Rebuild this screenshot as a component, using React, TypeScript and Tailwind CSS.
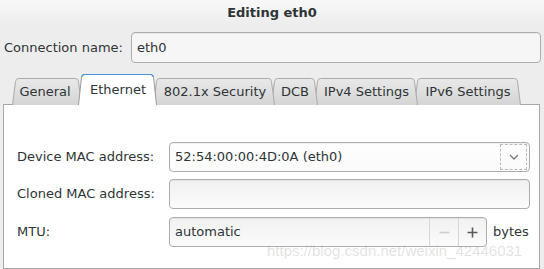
import React from "react"

type Tab = { label: string; width: number; z: string; active?: boolean; pad: string }

const tabs: Tab[] = [
    { label: "General", width: 70, z: "z-[6]", pad: "pr-[4px]" },
    { label: "Ethernet", width: 79, z: "z-[9]", active: true, pad: "pl-px" },
    { label: "802.1x Security", width: 122, z: "z-[4]", pad: "pl-[2px]" },
    { label: "DCB", width: 47, z: "z-[3]", pad: "pl-px" },
    { label: "IPv4 Settings", width: 104, z: "z-[2]", pad: "pl-px" },
    { label: "IPv6 Settings", width: 107, z: "z-[1]", pad: "pl-px" },
]

const TabShape = ({ w, h, active }: { w: number; h: number; active?: boolean }) => {
    const s = 3.5
    const sides = `M0.5 ${h} L${s} 3.5 Q${s + 0.4} 0.5 ${s + 3} 0.5 L${w - s - 3} 0.5 Q${w - s - 0.4} 0.5 ${w - s} 3.5 L${w - 0.5} ${h}`
    const top = `M${s + 0.2} 3 Q${s + 0.6} 0.5 ${s + 3} 0.5 L${w - s - 3} 0.5 Q${w - s - 0.6} 0.5 ${w - s - 0.2} 3`
    const id = `g${w}`
    return (
        <svg className="absolute inset-0" width={w} height={h} viewBox={`0 0 ${w} ${h}`}>
            <defs>
                <linearGradient id={id} x1="0" y1="0" x2="0" y2="1">
                    <stop offset="0" stopColor={active ? "#ffffff" : "#e9e9e9"} />
                    <stop offset="1" stopColor={active ? "#ffffff" : "#d4d4d4"} />
                </linearGradient>
            </defs>
            <path d={sides + " Z"} fill={`url(#${id})`} stroke="none" />
            <path d={sides} fill="none" stroke={active ? "#9c9c9c" : "#aaaaaa"} strokeWidth="1" />
            {active && <path d={top} fill="none" stroke="#4a90d9" strokeWidth="1.2" />}
        </svg>
    )
}

const Field = ({ children, className = "" }: { children?: React.ReactNode; className?: string }) => (
    <div className={`h-[30px] flex items-center border border-[#adadad] rounded-[4px] bg-gradient-to-b from-[#f1f1f1] to-[#fbfbfb] shadow-[inset_0_1px_1px_rgba(0,0,0,0.06)] ${className}`}>
        {children}
    </div>
)

export default function App() {
    return (
        <div className="relative w-[544px] h-[269px] overflow-hidden bg-[#ededed] flex flex-col text-[13px] text-[#2e3436] font-['DejaVu_Sans',sans-serif]">
            <div className="h-[25px] shrink-0 flex items-center justify-center font-bold bg-gradient-to-b from-[#f8f8f8] to-[#ededed]">
                Editing eth0
            </div>

            <div className="mt-[7px] flex items-center pl-[4px] pr-[3px]">
                <span className="w-[127px]">Connection name:</span>
                <Field className="flex-1 h-[31px] pl-[5px] bg-none bg-[#f6f6f6]">eth0</Field>
            </div>

            <div className="relative z-10 mt-[11px] -mb-px flex items-end pl-[12px] h-[31px]">
                {tabs.map((t, i) => {
                    const h = t.active ? 31 : 27
                    return (
                        <div
                            key={t.label}
                            className={`relative shrink-0 ${t.z} ${i > 0 ? "-ml-[4px]" : ""}`}
                            style={{ width: t.width, height: h }}
                        >
                            <TabShape w={t.width} h={h} active={t.active} />
                            <div className={`relative flex items-center justify-center h-[27px] whitespace-nowrap ${t.active ? "mt-[2px]" : ""} ${t.pad}`}>
                                {t.label}
                            </div>
                        </div>
                    )
                })}
            </div>

            <div className="flex-1 ml-[3px] mr-[4px] bg-white border border-[#a7a7a7] pt-[37px] pl-[13px] pr-[9px] flex flex-col gap-[7px]">
                <div className="flex items-center">
                    <span className="w-[152px] shrink-0">Device MAC address:</span>
                    <Field className="flex-1 pl-[5px] pr-[2px] from-[#fdfdfd] to-[#efefef]">
                        <span className="flex-1">52:54:00:00:4D:0A (eth0)</span>
                        <span className="w-[27px] h-[26px] border border-dashed border-[#b9b9b9] flex items-center justify-center">
                            <svg width="10" height="6" viewBox="0 0 10 6">
                                <path d="M1 1 L5 5 L9 1" fill="none" stroke="#777" strokeWidth="1.3" />
                            </svg>
                        </span>
                    </Field>
                </div>
                <div className="flex items-center">
                    <span className="w-[152px] shrink-0">Cloned MAC address:</span>
                    <Field className="flex-1" />
                </div>
                <div className="flex items-center mt-px">
                    <span className="w-[152px] shrink-0">MTU:</span>
                    <Field className="w-[318px] pl-[5px]">
                        <span className="flex-1">automatic</span>
                        <span className="w-[29px] h-full border-l border-[#d6d6d6] flex items-center justify-center">
                            <svg width="11" height="11" viewBox="0 0 11 11">
                                <path d="M0.5 5.5 H10.5" stroke="#cdcdcd" strokeWidth="1.6" />
                            </svg>
                        </span>
                        <span className="w-[28px] h-full border-l border-[#d6d6d6] flex items-center justify-center">
                            <svg width="11" height="11" viewBox="0 0 11 11">
                                <path d="M0.5 5.5 H10.5 M5.5 0.5 V10.5" stroke="#5a5a5a" strokeWidth="1.6" />
                            </svg>
                        </span>
                    </Field>
                    <span className="ml-[6px]">bytes</span>
                </div>
            </div>

            <div className="absolute left-[267px] top-[240px] text-[15px] text-[rgba(170,170,170,0.35)] font-['Liberation_Sans',sans-serif] whitespace-nowrap">
                https://blog.csdn.net/weixin_42446031
            </div>
        </div>
    )
}
